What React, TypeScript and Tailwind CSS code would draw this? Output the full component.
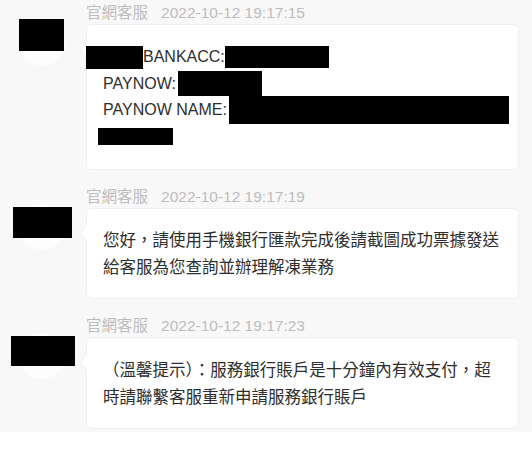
import React from 'react';

const FONT = 'font-["Liberation_Sans","Noto_Sans_CJK_TC",sans-serif]';

interface MessageProps {
  time: string;
  boxClass: string;
  bubbleClass: string;
  children: React.ReactNode;
}

const Message: React.FC<MessageProps> = ({ time, boxClass, bubbleClass, children }) => {
  return (
    <div className="flex">
      <div className="relative w-[86px] shrink-0">
        <div className="ml-[19px] mt-[17px] w-[46px] h-[46px] rounded-full bg-[#fdfdfd]" />
        <div className={`absolute bg-black ${boxClass}`} />
      </div>
      <div className="flex-1 min-w-0">
        <div className="h-[20px] mb-[1px] flex items-center text-[15.5px] text-[#bdbdbd] whitespace-nowrap">
          <span>官網客服</span>
          <span className="ml-[13px]">{time}</span>
        </div>
        <div className={`relative bg-white rounded-[6px] border border-[#efefef] pl-[16px] pr-[14px] text-[#2e2e2e] ${bubbleClass}`}>
          <div className="absolute left-[-6px] top-[19px] w-[11px] h-[11px] rotate-45 bg-white border-l border-b border-[#efefef]" />
          <div className="relative">{children}</div>
        </div>
      </div>
    </div>
  );
};

const App: React.FC = () => {
  return (
    <div className={`w-[532px] h-[463px] bg-white overflow-hidden ${FONT}`}>
      <div className="bg-[#f8f8f8] h-[432px] pt-[3px] pr-[13px] flex flex-col gap-[17px]">
        <Message
          time="2022-10-12 19:17:15"
          boxClass="left-[19px] top-[16px] w-[45px] h-[32px]"
          bubbleClass="pt-[19px] pb-[19px] text-[16px]"
        >
          <div className="flex items-center h-[26.5px] whitespace-nowrap">
            <span className="inline-block shrink-0 -ml-[17px] w-[57px] h-[23px] bg-black" />
            <span>BANKACC:</span>
            <span className="inline-block shrink-0 w-[104px] h-[22px] bg-black" />
          </div>
          <div className="flex items-center h-[26.5px] whitespace-nowrap">
            <span>PAYNOW:</span>
            <span className="inline-block shrink-0 ml-[2px] w-[84px] h-[25px] bg-black" />
          </div>
          <div className="flex items-center h-[26.5px] whitespace-nowrap">
            <span>PAYNOW NAME:</span>
            <span className="inline-block shrink-0 ml-[2px] w-[280px] h-[28px] bg-black" />
          </div>
          <div className="flex items-center h-[26.5px]">
            <span className="inline-block shrink-0 -ml-[5px] w-[75px] h-[17px] bg-black" />
          </div>
        </Message>

        <Message
          time="2022-10-12 19:17:19"
          boxClass="left-[13px] top-[20px] w-[59px] h-[31px]"
          bubbleClass="pt-[18px] pb-[17px] text-[16.5px] leading-[27px]"
        >
          <div>
            您好，請使用手機銀行匯款完成後請截圖成功票據發送
            <br />
            給客服為您查詢並辦理解凍業務
          </div>
        </Message>

        <Message
          time="2022-10-12 19:17:23"
          boxClass="left-[11px] top-[20px] w-[64px] h-[30px]"
          bubbleClass="pt-[19px] pb-[17px] text-[16.5px] leading-[27px]"
        >
          <div>
            （溫馨提示）：服務銀行賬戶是十分鐘內有效支付，超
            <br />
            時請聯繫客服重新申請服務銀行賬戶
          </div>
        </Message>
      </div>
    </div>
  );
};

export default App;
